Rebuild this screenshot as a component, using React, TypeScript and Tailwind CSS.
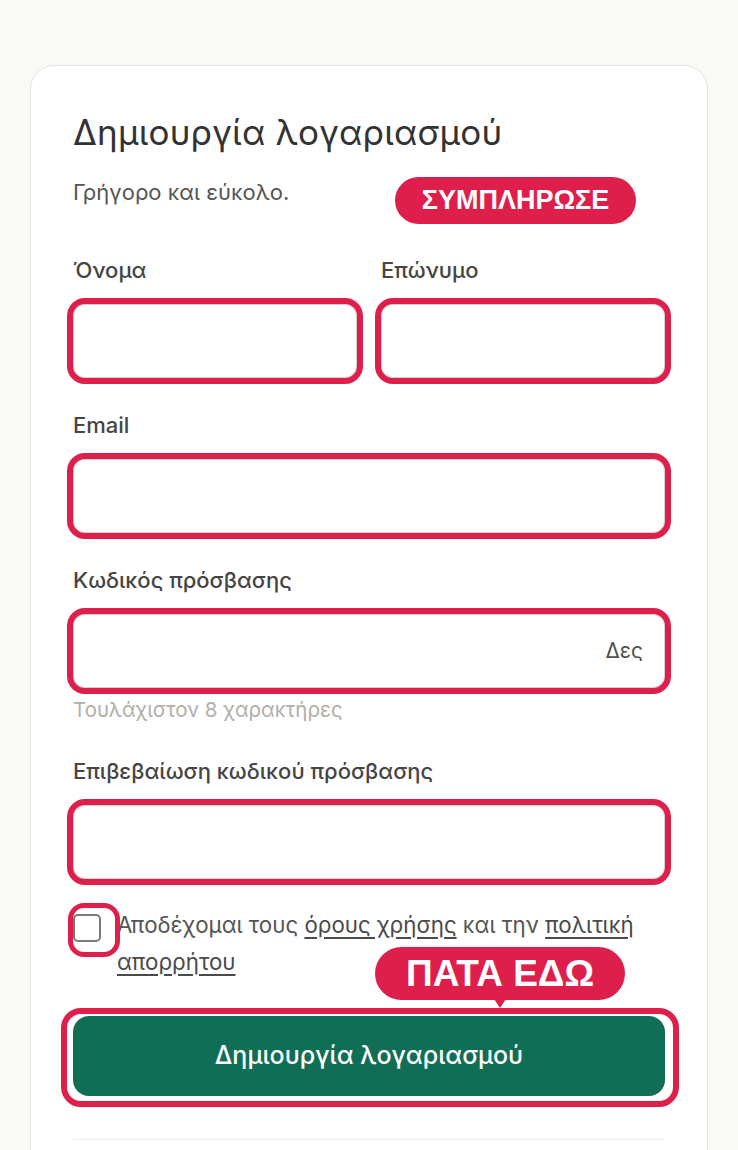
import React from "react";

function Field({
  label,
  right,
  helper,
  className = "",
}: {
  label: string;
  right?: string;
  helper?: string;
  className?: string;
}) {
  return (
    <div className={className}>
      <div className="text-[22px] leading-[30px] font-medium text-[#454545]">{label}</div>
      <div className="mt-[19px] flex h-[74px] items-center justify-end rounded-[12px] border border-[#d2d2d2] bg-white pr-[21px] shadow-[0_1px_1px_rgba(0,0,0,0.18)] outline-[6px] outline-offset-0 outline-solid outline-[#df1f4b]">
        {right && <span className="text-[21px] text-[#505050]">{right}</span>}
      </div>
      {helper && (
        <div className="mt-[8px] text-[20.5px] leading-[28px] text-[#b3afa8]">{helper}</div>
      )}
    </div>
  );
}

export default function App() {
  return (
    <div className="min-h-[1150px] bg-[#f9f9f6] px-[30px] pt-[65px] font-['Inter',sans-serif]">
      <div className="rounded-[24px] border border-[#e6e6e0] bg-white px-[42px] pt-[45px] pb-[60px]">
        <h1 className="text-[35px] leading-[42px] font-normal tracking-[0.2px] text-[#333333]">
          Δημιουργία λογαριασμού
        </h1>
        <div className="relative mt-[24px]">
          <p className="text-[22px] leading-[30px] text-[#555555]">Γρήγορο και εύκολο.</p>
          <div className="absolute left-[322px] top-[0px] flex h-[47px] w-[241px] items-center justify-center rounded-full bg-[#df1f4b] font-['Liberation_Sans',Arial,sans-serif] text-[27px] font-bold text-white">
            ΣΥΜΠΛΗΡΩΣΕ
          </div>
        </div>

        <div className="mt-[48px] grid grid-cols-2 gap-[24px]">
          <Field label="Όνομα" />
          <Field label="Επώνυμο" />
        </div>
        <Field label="Email" className="mt-[32px]" />
        <Field
          label="Κωδικός πρόσβασης"
          right="Δες"
          helper="Τουλάχιστον 8 χαρακτήρες"
          className="mt-[32px]"
        />
        <Field label="Επιβεβαίωση κωδικού πρόσβασης" className="mt-[32px]" />

        <div className="mt-[27px] flex items-start gap-[16px]">
          <div className="relative mt-[8px] shrink-0">
            <div className="h-[28px] w-[28px] rounded-[5px] border-2 border-[#7a7a7a] bg-white" />
            <div className="absolute left-[-5px] top-[-11px] h-[54px] w-[52px] rounded-[16px] border-[5px] border-[#df1f4b]" />
          </div>
          <p className="text-[22.3px] leading-[37px] text-[#555555]">
            Αποδέχομαι τους{" "}
            <span className="underline underline-offset-[4px] text-[#4a4a4a]">όρους χρήσης</span> και
            την{" "}
            <span className="underline underline-offset-[4px] text-[#4a4a4a]">
              πολιτική απορρήτου
            </span>
          </p>
        </div>

        <div className="relative mt-[36px]">
          <div className="absolute left-[-12px] right-[-14px] top-[-8px] bottom-[-11px] rounded-[20px] border-[6px] border-[#df1f4b]" />
          <button className="relative flex h-[80px] w-full items-center justify-center rounded-[16px] bg-[#106e56] text-[25px] font-medium text-white">
            Δημιουργία λογαριασμού
          </button>
          <div className="absolute left-[302px] top-[-69px] h-[53px] w-[250px]">
            <div className="flex h-full w-full items-center justify-center rounded-full bg-[#df1f4b] font-['Liberation_Sans',Arial,sans-serif] text-[37px] font-bold text-white">
              ΠΑΤΑ ΕΔΩ
            </div>
            <div className="absolute left-[119px] top-[52px] h-0 w-0 border-x-[6px] border-t-[9px] border-x-transparent border-t-[#df1f4b]" />
          </div>
        </div>

        <div className="mt-[43px] border-t border-[#ececec]" />
        <div className="h-[60px]" />
      </div>
    </div>
  );
}
